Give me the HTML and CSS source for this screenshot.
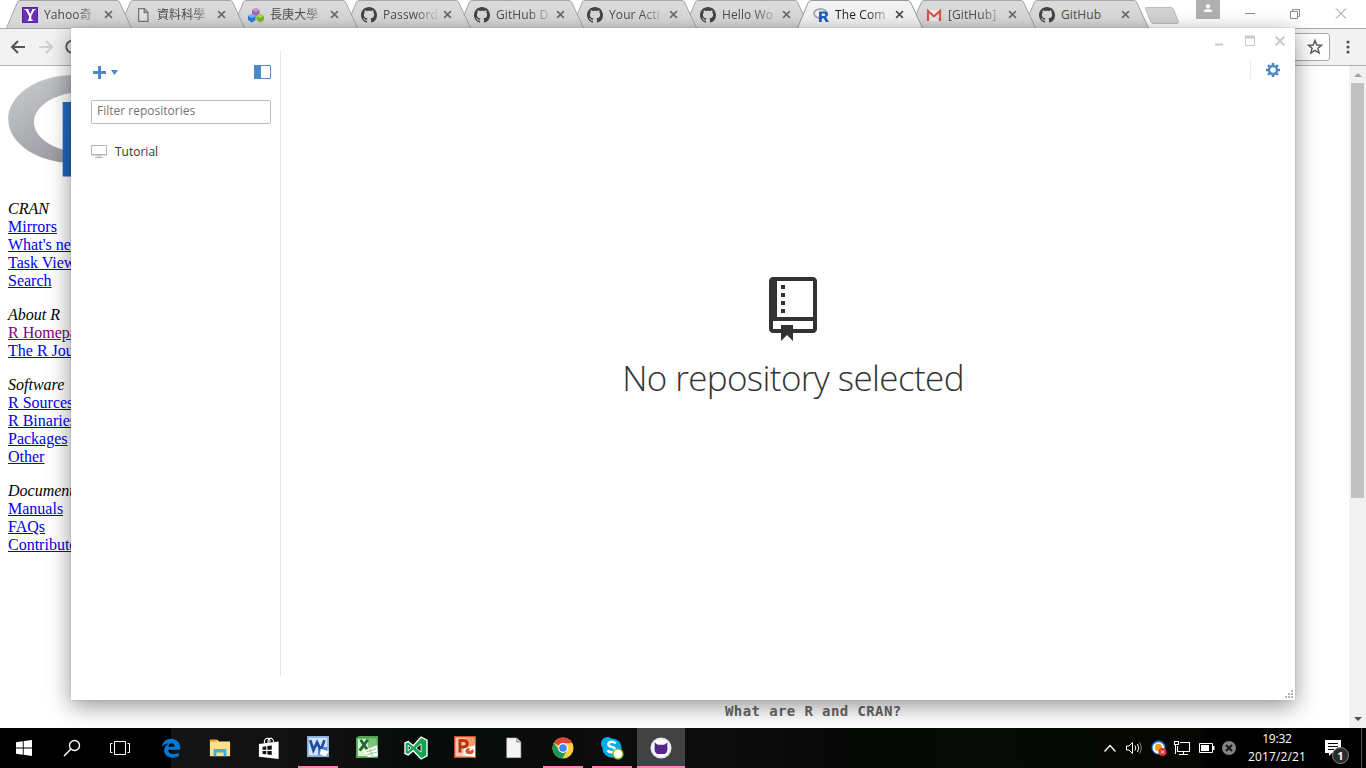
FILE: index.html
```html
<!DOCTYPE html>
<html lang="zh-Hant">
<head>
<meta charset="utf-8">
<title>The Comprehensive R Archive Network</title>
<link rel="stylesheet" href="styles.css">
</head>
<body>
<svg class="defs" width="0" height="0">
  <defs>
    <linearGradient id="tabfill" x1="0" y1="0" x2="0" y2="1"><stop offset="0" stop-color="#dadada"/><stop offset=".75" stop-color="#d9d9d9"/><stop offset="1" stop-color="#d2d2d2"/></linearGradient>
    <linearGradient id="ring" x1="0" y1="0" x2="1" y2="1"><stop offset="0" stop-color="#cbced0"/><stop offset="1" stop-color="#84838b"/></linearGradient>
    <linearGradient id="stem" x1="0" y1="0" x2="1" y2="1"><stop offset="0" stop-color="#276dc3"/><stop offset="1" stop-color="#165caa"/></linearGradient>
    <linearGradient id="purple" x1="0" y1="0" x2="0" y2="1"><stop offset="0" stop-color="#4d2d80"/><stop offset="1" stop-color="#5c2495"/></linearGradient>
    <symbol id="tab" viewBox="0 0 126 28"><path d="M.5 28 L11.5 2 Q12.3 .5 14 .5 H111 Q112.7 .5 113.5 2 L125.5 28"/></symbol>
    <symbol id="x" viewBox="0 0 10 10"><path d="M1.2 1.2 8.8 8.8M8.8 1.2 1.2 8.8" fill="none" stroke="currentColor" stroke-width="1.8"/></symbol>
    <symbol id="gh" viewBox="0 0 16 16"><path fill="#444" d="M8 0C3.58 0 0 3.58 0 8c0 3.54 2.29 6.53 5.47 7.59.4.07.55-.17.55-.38 0-.19-.01-.82-.01-1.49-2.01.37-2.53-.49-2.69-.94-.09-.23-.48-.94-.82-1.13-.28-.15-.68-.52-.01-.53.63-.01 1.08.58 1.23.82.72 1.21 1.87.87 2.33.66.07-.52.28-.87.51-1.07-1.78-.2-3.64-.89-3.64-3.95 0-.87.31-1.59.82-2.15-.08-.2-.36-1.02.08-2.12 0 0 .67-.21 2.2.82.64-.18 1.32-.27 2-.27s1.36.09 2 .27c1.53-1.04 2.2-.82 2.2-.82.44 1.1.16 1.92.08 2.12.51.56.82 1.27.82 2.15 0 3.07-1.87 3.75-3.65 3.95.29.25.54.73.54 1.48 0 1.07-.01 1.93-.01 2.2 0 .21.15.46.55.38A8.01 8.01 0 0 0 16 8c0-4.42-3.58-8-8-8z"/></symbol>
  </defs>
</svg>
<div class="desktop">
  <div class="browser">
    <div class="strip">
      <div class="tab t1"><svg class="shape"><use href="#tab"/></svg><svg class="fav" viewBox="0 0 16 16"><rect width="16" height="16" fill="#6d2fb5"/><rect x=".5" y=".5" width="15" height="15" fill="none" stroke="#50249a"/><path d="M2.5 2H6.5V3L8.2 7 10.3 3V2H13.5V3H12.5L9.3 9V12.5H10.5V14H5.8V12.5H7V9L3.7 3H2.5z" fill="#fff"/></svg><span class="name">Yahoo奇</span><svg class="close"><use href="#x"/></svg></div>
      <div class="tab t2"><svg class="shape"><use href="#tab"/></svg><svg class="fav" viewBox="0 0 16 16"><path d="M3.6 1.6H9.4L12.9 5.2V14.4H3.6zM9.2 1.8V5.5H12.8" fill="#e4e4e4" stroke="#777" stroke-width="1.3"/></svg><span class="name">資料科學</span><svg class="close"><use href="#x"/></svg></div>
      <div class="tab t3"><svg class="shape"><use href="#tab"/></svg><svg class="fav wide" viewBox="0 0 16 16"><path d="M4 3 8 1 11.500 3V7L8 9 4 7z" fill="#a665b8"/><path d="M4 3 8 1 11.500 3 8 5z" fill="#cb9bd6"/><path d="M0 9 4 7 7.500 9V13L4 15.500 0 13z" fill="#287de0"/><path d="M0 9 4 7 7.500 9 4 11z" fill="#74b6fa"/><path d="M8.500 9 12 7 16 9V13L12 15.500 8.500 13z" fill="#72bd26"/><path d="M8.500 9 12 7 16 9 12 11z" fill="#a9e14b"/></svg><span class="name">長庚大學</span><svg class="close"><use href="#x"/></svg></div>
      <div class="tab t4"><svg class="shape"><use href="#tab"/></svg><svg class="fav"><use href="#gh"/></svg><span class="name">Password</span><svg class="close"><use href="#x"/></svg></div>
      <div class="tab t5"><svg class="shape"><use href="#tab"/></svg><svg class="fav"><use href="#gh"/></svg><span class="name">GitHub D</span><svg class="close"><use href="#x"/></svg></div>
      <div class="tab t6"><svg class="shape"><use href="#tab"/></svg><svg class="fav"><use href="#gh"/></svg><span class="name">Your Acti</span><svg class="close"><use href="#x"/></svg></div>
      <div class="tab t7"><svg class="shape"><use href="#tab"/></svg><svg class="fav"><use href="#gh"/></svg><span class="name">Hello Wo</span><svg class="close"><use href="#x"/></svg></div>
      <div class="tab t8 active"><svg class="shape"><use href="#tab"/></svg><svg class="fav rfav" viewBox="0 0 16 16"><ellipse cx="7.500" cy="6.500" rx="6.500" ry="4.600" fill="none" stroke="#a9adb3" stroke-width="2"/><path d="M6 15V4.500H11.500Q15 4.500 15 7.300 15 9.500 13 10L16 15H12.800L10.500 11H8.800V15zM8.800 6.500V9H11Q12.300 9 12.300 7.700 12.300 6.500 11 6.500z" fill="#1f62bb" fill-rule="evenodd"/></svg><span class="name">The Com</span><svg class="close"><use href="#x"/></svg></div>
      <div class="tab t9"><svg class="shape"><use href="#tab"/></svg><svg class="fav" viewBox="0 0 16 16"><path d="M1 3H15V14H1z" fill="#eee"/><path d="M3 13 7 8.500M13 13 9 8.500" stroke="#ccc"/><path d="M2 14V4L8 9.300 14 4V14" fill="none" stroke="#dd5347" stroke-width="2.200"/></svg><span class="name">[GitHub]</span><svg class="close"><use href="#x"/></svg></div>
      <div class="tab t10"><svg class="shape"><use href="#tab"/></svg><svg class="fav"><use href="#gh"/></svg><span class="name full">GitHub</span><svg class="close"><use href="#x"/></svg></div>
      <svg class="newtab" viewBox="0 0 36 20"><path d="M2.500 1.500H27Q28.500 1.500 29.500 3L34.500 16Q34.500 17.500 33 17.500H9.500Q8 17.500 7 16L1.500 3Q1 1.500 2.500 1.500z" fill="#d3d3d3" stroke="#bdbdbd"/></svg>
      <div class="user"><svg viewBox="0 0 24 19"><circle cx="12" cy="6.300" r="2.100" fill="#fff"/><path d="M8 12V11Q8 9 12 9T16 11V12z" fill="#fff"/></svg></div>
      <svg class="sys" viewBox="0 0 100 14"><path d="M0 7.500H10M45.500 5.500H52.500V12.500H45.500zM47.500 5.500V3.500H54.500V10.500H52.500M91 2.500 101 12.500M101 2.500 91 12.500" fill="none" stroke="#8b8b8b"/></svg>
    </div>
    <div class="toolbar">
      <svg class="nav" viewBox="0 0 80 20"><path d="M15 10H2M8 4 2 10 8 16" fill="none" stroke="#555" stroke-width="2"/><path d="M29 10H42M36 4 42 10 36 16" fill="none" stroke="#cfcfcf" stroke-width="2"/><path d="M66 5A6 6 0 1 0 66 14.500" fill="none" stroke="#555" stroke-width="2"/></svg>
      <div class="address"><svg viewBox="0 0 16 16"><path d="M8 1.500 9.800 6 14.500 6.300 10.900 9.300 12.100 14 8 11.400 3.900 14 5.100 9.300 1.500 6.300 6.200 6z" fill="none" stroke="#555" stroke-width="1.400"/></svg></div>
      <svg class="dots" viewBox="0 0 4 14"><circle cx="2" cy="2" r="1.600"/><circle cx="2" cy="7" r="1.600"/><circle cx="2" cy="12" r="1.600"/></svg>
    </div>
    <div class="page">
      <div class="links">
        <svg class="rlogo" viewBox="0 0 724 561"><path fill="url(#ring)" fill-rule="evenodd" d="M361.453,485.937C162.329,485.937,0.906,377.828,0.906,244.469C0.906,111.109,162.329,3,361.453,3C560.578,3,722,111.109,722,244.469C722,377.828,560.578,485.937,361.453,485.937ZM416.641,97.406C265.289,97.406,142.594,171.314,142.594,262.484C142.594,353.654,265.289,427.562,416.641,427.562C567.992,427.562,679.687,377.033,679.687,262.484C679.687,147.971,567.992,97.406,416.641,97.406Z"/><path fill="url(#stem)" d="M300 152H540Q650 160 650 265 650 340 590 370L700 560H575L470 372H410V560H300z"/></svg>
        <div class="group"><em>CRAN</em><a>Mirrors</a><a>What's new?</a><a>Task Views</a><a>Search</a></div>
        <div class="group"><em>About R</em><a class="seen">R Homepage</a><a>The R Journal</a></div>
        <div class="group"><em>Software</em><a>R Sources</a><a>R Binaries</a><a>Packages</a><a>Other</a></div>
        <div class="group"><em>Documentation</em><a>Manuals</a><a>FAQs</a><a>Contributed</a></div>
      </div>
      <div class="article"><h3>What are R and CRAN?</h3></div>
      <div class="scroll"><i class="up"></i><div class="thumb"></div><i class="down"></i></div>
    </div>
  </div>

  <div class="window">
    <div class="repos">
      <div class="tools">
        <svg class="add" viewBox="0 0 28 14"><path d="M2 7.500H15M8.500 1V14" stroke="#4a89c5" stroke-width="3"/><path d="M20 5H27L23.500 10z" fill="#4a89c5"/></svg>
        <svg class="toggle" viewBox="0 0 17 14"><path d="M.5 .5H16.500V13.500H.5z" fill="#fff" stroke="#4a89c5"/><path d="M0 0H7V14H0z" fill="#4a89c5"/></svg>
      </div>
      <div class="filter">Filter repositories</div>
      <div class="repo"><svg viewBox="0 0 16 13"><path d="M.5 .5H15.500V10H.5z" fill="none" stroke="#b4b4b4"/><path d="M0 9.500H16M6 11H10M4 12.500H12" stroke="#b4b4b4"/></svg><span>Tutorial</span></div>
    </div>
    <div class="pane">
      <svg class="ctl" viewBox="0 0 70 12"><path d="M0 9.500H8" stroke="#c9c9c9" stroke-width="2"/><path d="M30.500 1V10.500H39.500V1" fill="none" stroke="#c9c9c9"/><path d="M30 2H40" stroke="#c9c9c9" stroke-width="3"/><path d="M60.500 1.500 69.500 10.500M69.500 1.500 60.500 10.500" stroke="#c9c9c9" stroke-width="2"/></svg>
      <div class="settings"><svg viewBox="0 0 14 14"><path d="M7 0V14M0 7H14M2.100 2.100 11.900 11.900M11.900 2.100 2.100 11.900" stroke="#4a89c5" stroke-width="2.600"/><circle cx="7" cy="7" r="4" fill="#fff" stroke="#4a89c5" stroke-width="2.400"/></svg></div>
      <div class="blank">
        <svg viewBox="0 0 12 16"><path fill="#333" d="M4 9H3V8h1v1zm0-3H3v1h1V6zm0-2H3v1h1V4zm0-2H3v1h1V2zm8-1v12c0 .55-.45 1-1 1H6v2l-1.500-1.500L3 16v-2H1c-.55 0-1-.45-1-1V1c0-.55.45-1 1-1h10c.55 0 1 .45 1 1zm-1 10H1v2h2v-1h3v1h5v-2zm0-10H2v9h9V1z"/></svg>
        <h1>No repository selected</h1>
      </div>
      <svg class="grip" viewBox="0 0 8 8"><path d="M6 0h2v2H6zM3 3h2v2H3zM6 3h2v2H6zM0 6h2v2H0zM3 6h2v2H3zM6 6h2v2H6z" fill="#b5b5b5"/></svg>
    </div>
  </div>

  <div class="taskbar">
    <div class="cell"><svg viewBox="0 0 24 24"><path d="M4 6.200 10.800 5.200V11.500H4zM11.700 5.100 20 4V11.500H11.700zM4 12.400H10.800V18.700L4 17.700zM11.700 12.400H20V20L11.700 18.800z" fill="#fff"/></svg></div>
    <div class="cell"><svg viewBox="0 0 24 24"><circle cx="14.500" cy="9.500" r="5" fill="none" stroke="#fff" stroke-width="1.400"/><path d="M11 13 4 20" stroke="#fff" stroke-width="1.500"/></svg></div>
    <div class="cell last"><svg viewBox="0 0 24 24"><path d="M6.500 5.500H17.500V18.500H6.500zM4.500 7.500H2.500V16.500H4.500M19.500 7.500H21.500V16.500H19.500" fill="none" stroke="#fff"/></svg></div>
    <div class="cell app"><svg viewBox="0 0 24 24"><path d="M2 11C3 5 7 2 12 2 18 2 22 6 22 11.500V14H9C9 17 11.500 18.800 14.500 18.800 17 18.800 19 18.200 20.500 17.200V21C18.500 22 16.500 22.500 14 22.500 8 22.500 4.500 19 4.500 14.500 4.500 11 6.500 8.500 9.500 7 6 7 3.500 8.500 2 11zM9.200 10.500H16C16 8 14.800 6.800 12.800 6.800 10.800 6.800 9.500 8.300 9.200 10.500z" fill="#0078d7" fill-rule="evenodd"/></svg></div>
    <div class="cell app"><svg viewBox="0 0 24 24"><path d="M1 3H9L11 5H23V21H1z" fill="#ffe08a"/><path d="M1 3H9V5H1z" fill="#e7a928"/><path d="M5 21V14Q5 13 6 13H18Q19 13 19 14V21H16V17H8V21z" fill="#35b2e8"/></svg></div>
    <div class="cell app"><svg viewBox="0 0 24 24"><path d="M1 7.500 22.500 5V24L1 21.500z" fill="#fff"/><path d="M7 7V4Q8 1 11 1.500 13 2 13 4V6M11 7V3.500Q13 0 15.500 2 17 3 17 5.500" fill="none" stroke="#fff" stroke-width="1.200"/><path d="M5 10.500 9 10V14H5zM10.200 9.900 15 9.300V14H10.200zM5 15.200H9V18.800L5 18.500zM10.200 15.200H15V19.500L10.200 19z" fill="#111"/></svg></div>
    <div class="cell app on office"><svg viewBox="0 0 24 24"><path d="M0 0H24V23H0z" fill="#8aaede"/><path d="M2 2H22V21H2z" fill="#d5e4f8"/><path d="M12 12H22V21H12z" fill="#5687cb"/><path d="M3.500 4.500 7 15.500 11 7 15 15.500 19 4.500" fill="none" stroke="#1b4fa6" stroke-width="3"/><path d="M15 14 24 17 20 22 14 20z" fill="#fff"/></svg></div>
    <div class="cell app office"><svg viewBox="0 0 24 24"><path d="M0 2 3 0H24V24H0z" fill="#4fa64f"/><path d="M2 3H22V22H2z" fill="#d9efd4"/><path d="M13 3H22V13H13z" fill="#7dc37b"/><path d="M5 4 13 16M13 4 4 16" stroke="#1b6c2e" stroke-width="3"/><path d="M8 16 23 10 24 22 13 23z" fill="#fff"/><path d="M11 17.500 22 14M12 20.500 23 17.500M15 14 18 22" stroke="#83bd7c"/></svg></div>
    <div class="cell app"><svg viewBox="0 0 24 24"><path d="M0 6.500 3.500 5 9 9.500 17.500 0 24 3.500V20.500L17.500 24 9 15 3.500 19.500 0 18z" fill="#10a650" stroke="#fff" stroke-width="1.500"/><path d="M3.500 9 6.500 12 3.500 15zM17.500 7.500V16.500L12 12z" fill="#111" stroke="#fff"/></svg></div>
    <div class="cell app office"><svg viewBox="0 0 24 24"><path d="M0 0H24V24H0z" fill="#d04a20"/><path d="M1.500 1.500H22.500V22.500H1.500z" fill="#f5c7ae"/><path d="M13 2H22V11H13z" fill="#f29a68"/><path d="M6.500 18V5H10Q14.500 5 14.500 8.500T10 12H7" fill="none" stroke="#b93612" stroke-width="3.200"/><path d="M11 14 23 10V23L10 21z" fill="#fff"/><ellipse cx="17" cy="16.500" rx="4.500" ry="3.300" fill="#dd5125"/><path d="M17 16.500V12.500L21.500 14z" fill="#fff"/></svg></div>
    <div class="cell app"><svg viewBox="0 0 24 24"><path d="M4 1H15L19.500 5.500V22.500H4z" fill="#f4f4f4" stroke="#aaa" stroke-width=".6"/><path d="M15 1V5.500H19.500" fill="#ccc" stroke="#777" stroke-width=".8"/></svg></div>
    <div class="cell app on"><svg viewBox="0 0 24 24"><circle cx="12" cy="12" r="11.500" fill="#ffcd46"/><path d="M12 12 2 6.300A11.500 11.500 0 0 1 22 6.500L12 7z" fill="#db4437"/><path d="M2 6.300A11.500 11.500 0 0 0 11.500 23.500L16.300 14.500 12 12 7.700 14.500z" fill="#159b59"/><circle cx="12" cy="12" r="5.400" fill="#fff"/><circle cx="12" cy="12" r="4.200" fill="#4285f4"/></svg></div>
    <div class="cell app on"><svg viewBox="0 0 24 24"><circle cx="7" cy="7" r="7" fill="#00aff0"/><circle cx="12" cy="12" r="10.500" fill="#00aff0"/><path d="M16 7Q14 5 11.500 5.200 8 5.500 8 8 8 10 11.500 10.800 15.500 11.500 15.500 14 15.500 16.500 12 16.700 8.500 16.700 7 14.500" fill="none" stroke="#fff" stroke-width="2.700"/><circle cx="18.500" cy="18.500" r="5.500" fill="#fff" stroke="#7fba00" stroke-width="1.400"/></svg></div>
    <div class="cell app on current"><svg viewBox="0 0 24 24"><circle cx="12" cy="12" r="11.500" fill="#dfe5f5"/><circle cx="12" cy="12" r="9.500" fill="#fff"/><path d="M5 6 8.500 8.500H15.500L19 6V10.500Q20 16.500 16 18.500H8Q4 16.500 5 10.500z" fill="url(#purple)"/></svg></div>
    <div class="tray">
      <svg class="status" viewBox="0 0 136 20"><path d="M4.500 13.500 10 7.500 15.500 13.500" fill="none" stroke="#fff" stroke-width="1.300"/><path d="M26.500 8H29L32.500 4.500V15.500L29 12H26.500z" fill="none" stroke="#fff"/><path d="M35 7.500Q36.500 10 35 12.500M37.500 6Q40 10 37.500 14" fill="none" stroke="#fff"/><path d="M39.500 4.500Q43 10 39.500 15.500" fill="none" stroke="#888"/><circle cx="58.500" cy="9.500" r="7" fill="#1c76d1"/><circle cx="58.500" cy="10" r="5.800" fill="#fff"/><circle cx="58.500" cy="9.500" r="3.700" fill="#f79a1e"/><circle cx="62.500" cy="14" r="4" fill="#d8312f"/><path d="M61 12.500 64 15.500M64 12.500 61 15.500" stroke="#fff"/><path d="M80 4.500H89.500V13.500H77.500V8M83.500 14V16.500M79 16.500H88M74.500 3.500H78.500V6.500H74.500zM75.500 7V16" fill="none" stroke="#fff" stroke-width="1.100"/><path d="M99.500 5.500H112.500V14.500H99.500z" fill="none" stroke="#fff"/><path d="M101 7H109V13H101zM113 8H114.500V12H113z" fill="#fff"/><circle cx="129" cy="10" r="7" fill="#848484"/><path d="M126 7 132 13M132 7 126 13" stroke="#111" stroke-width="1.800"/></svg>
      <div class="clock"><span>19:32</span><span class="date">2017/2/21</span></div>
      <div class="notice"><svg viewBox="0 0 18 16"><path d="M1 0H17V13H8L5 16V13H1z" fill="#fff"/><path d="M4 3.500H14M4 6.500H14M4 9.500H10" stroke="#000"/></svg><b>1</b></div>
      <div class="edge"></div>
    </div>
  </div>
</div>
</body>
</html>
```
FILE: styles.css
```css
* { box-sizing: border-box; }
body { margin: 0; font-family: "Open Sans", "Noto Sans", "Noto Sans CJK TC", sans-serif; }
svg { display: block; flex: none; overflow: visible; }
.defs { position: absolute; }
.desktop { position: relative; width: 1366px; height: 768px; overflow: hidden; display: flex; flex-direction: column; background: #fff; }
.browser { height: 728px; display: flex; flex-direction: column; overflow: hidden; }

.strip { height: 28px; display: flex; padding-left: 6px; background: #fff; isolation: isolate; }
.tab { position: relative; flex: none; width: 126px; height: 28px; margin-right: -13px; padding-left: 16px; padding-top: 1px; display: flex; align-items: center; color: #4c4c4c; font-size: 12px; }
.tab .shape { position: absolute; left: 0; top: 0; width: 126px; height: 28px; z-index: -1; fill: url(#tabfill); stroke: #a5a5a5; }
.t1 { z-index: 10; } .t2 { z-index: 9; } .t3 { z-index: 8; } .t4 { z-index: 7; } .t5 { z-index: 6; }
.t6 { z-index: 5; } .t7 { z-index: 4; } .t9 { z-index: 2; } .t10 { z-index: 1; }
.tab.active { z-index: 11; color: #222; }
.active .shape { fill: #f2f2f2; stroke: #999; }
.fav { width: 16px; height: 16px; margin-right: 6px; }
.name { width: 54px; line-height: 20px; white-space: nowrap; letter-spacing: .1px; -webkit-mask-image: linear-gradient(90deg, #000 60%, rgba(0, 0, 0, .15) 100%); mask-image: linear-gradient(90deg, #000 60%, rgba(0, 0, 0, .15) 100%); }
.name.full { -webkit-mask-image: none; mask-image: none; }
.close { width: 9px; height: 9px; margin-left: 6px; color: #6a6a6a; }
.active .close { color: #4d4d4d; }
.newtab { width: 36px; height: 20px; margin: 6px 0 0 8px; flex: none; }
.strip .newtab { margin-left: 8px; }
.tab.t10 { margin-right: -13px; }
.user { width: 24px; height: 19px; margin-left: 16px; background: #b1b1b1; }
.sys { width: 100px; height: 14px; margin: 6px 0 0 25px; }

.toolbar { height: 38px; display: flex; align-items: center; background: #f2f2f2; border-top: 1px solid #a9a9a9; border-bottom: 1px solid #b3b3b3; padding-left: 10px; }
.nav { width: 80px; height: 20px; }
.address { width: 1240px; height: 28px; display: flex; align-items: center; justify-content: flex-end; padding-right: 6px; background: #fff; border: 1px solid #a9a9a9; border-radius: 3px; }
.address svg { width: 16px; height: 16px; }
.dots { width: 4px; height: 14px; margin-left: 16px; fill: #555; }

.page { flex: 1; display: flex; min-height: 0; font-family: "Liberation Serif", serif; font-size: 16px; line-height: 18px; }
.links { width: 170px; padding: 8px; overflow: hidden; }
.rlogo { width: 132px; height: 103px; margin-bottom: 23px; }
.group { display: flex; flex-direction: column; align-items: flex-start; padding-bottom: 16px; white-space: nowrap; }
.group a { color: #00e; text-decoration: underline; }
.group a.seen { color: #800080; }
.article { flex: 1; display: flex; align-items: flex-end; padding: 0 0 8px 555px; }
h3 { margin: 0; font: bold 14px/18px "DejaVu Sans Mono", monospace; letter-spacing: .4px; color: #666; }
.scroll { width: 17px; background: #f1f1f1; display: flex; flex-direction: column; align-items: center; }
.thumb { width: 13px; height: 415px; margin: 6px 0 auto; background: #c1c1c1; }
.up { margin-top: 7px; border: 4px solid transparent; border-top: 0; border-bottom: 4px solid #a3a3a3; }
.down { margin-bottom: 7px; border: 4px solid transparent; border-bottom: 0; border-top: 4px solid #505050; }

.window { position: absolute; left: 71px; top: 28px; width: 1224px; height: 672px; display: flex; background: #fff; box-shadow: 0 6px 22px rgba(0, 0, 0, .42), 0 0 2px rgba(0, 0, 0, .15); }
.repos { width: 210px; height: 625px; margin-top: 23px; padding: 14px 9px 0 20px; border-right: 1px solid #e4e4e4; }
.tools { display: flex; justify-content: space-between; }
.add { width: 28px; height: 14px; }
.toggle { width: 17px; height: 14px; }
.filter { height: 24px; margin-top: 21px; padding-left: 5px; border: 1px solid #bdbdbd; border-radius: 2px; font-size: 12px; line-height: 20px; color: #737373; }
.repo { display: flex; align-items: center; gap: 8px; margin-top: 17px; height: 20px; font-size: 12px; color: #333; }
.repo svg { width: 16px; height: 13px; }
.pane { flex: 1; display: flex; flex-direction: column; }
.ctl { width: 70px; height: 12px; margin: 7px 10px 0 auto; align-self: flex-end; }
.settings { align-self: flex-end; height: 18px; margin: 14px 15px 0 0; padding: 2px 0 0 15px; border-left: 1px solid #ececec; }
.settings svg { width: 14px; height: 14px; }
.blank { flex: 1; padding: 198px 0 0 10px; display: flex; flex-direction: column; align-items: center; }
.blank svg { width: 48px; height: 64px; }
h1 { margin: 12px 0 0; font-size: 35px; line-height: 50px; font-weight: 300; color: #333; letter-spacing: -.62px; white-space: nowrap; }
.grip { width: 8px; height: 8px; align-self: flex-end; margin: 0 2px 2px 0; }

.taskbar { position: relative; height: 40px; display: flex; color: #fff; background: linear-gradient(90deg, #000 171px, #141414 171px, #101010 330px, #080a0a 420px, #0e0d0d 700px, #060806 850px, #070a05 980px, #050604 1200px, #000 1210px); }
.cell { width: 48px; height: 40px; display: flex; align-items: center; justify-content: center; flex: none; }
.cell svg { width: 24px; height: 24px; }
.last { margin-right: 3px; }
.app { margin-right: 1px; }
.app svg { width: 22px; height: 22px; }
.office svg { margin-bottom: 2px; }
.on { background: linear-gradient(#ff80bd, #ff80bd) center bottom / 40px 2px no-repeat; }
.current { background: linear-gradient(#ff80bd, #ff80bd) center bottom / 48px 2px no-repeat, #424242; }
.tray { margin-left: auto; display: flex; align-items: center; }
.status { width: 136px; height: 20px; }
.clock { width: 82px; display: flex; flex-direction: column; align-items: center; font-size: 12px; line-height: 18px; letter-spacing: -.2px; }
.date { letter-spacing: .15px; }
.notice { position: relative; width: 43px; height: 40px; padding: 12px 0 0 6px; }
.notice svg { width: 18px; height: 16px; }
.notice b { position: absolute; left: 14px; top: 19px; width: 17px; height: 17px; border: 1px solid #888; border-radius: 50%; background: #2b2b2b; font-size: 11px; line-height: 15px; text-align: center; }
.edge { width: 1px; height: 40px; margin-right: 4px; background: #555; }
```
